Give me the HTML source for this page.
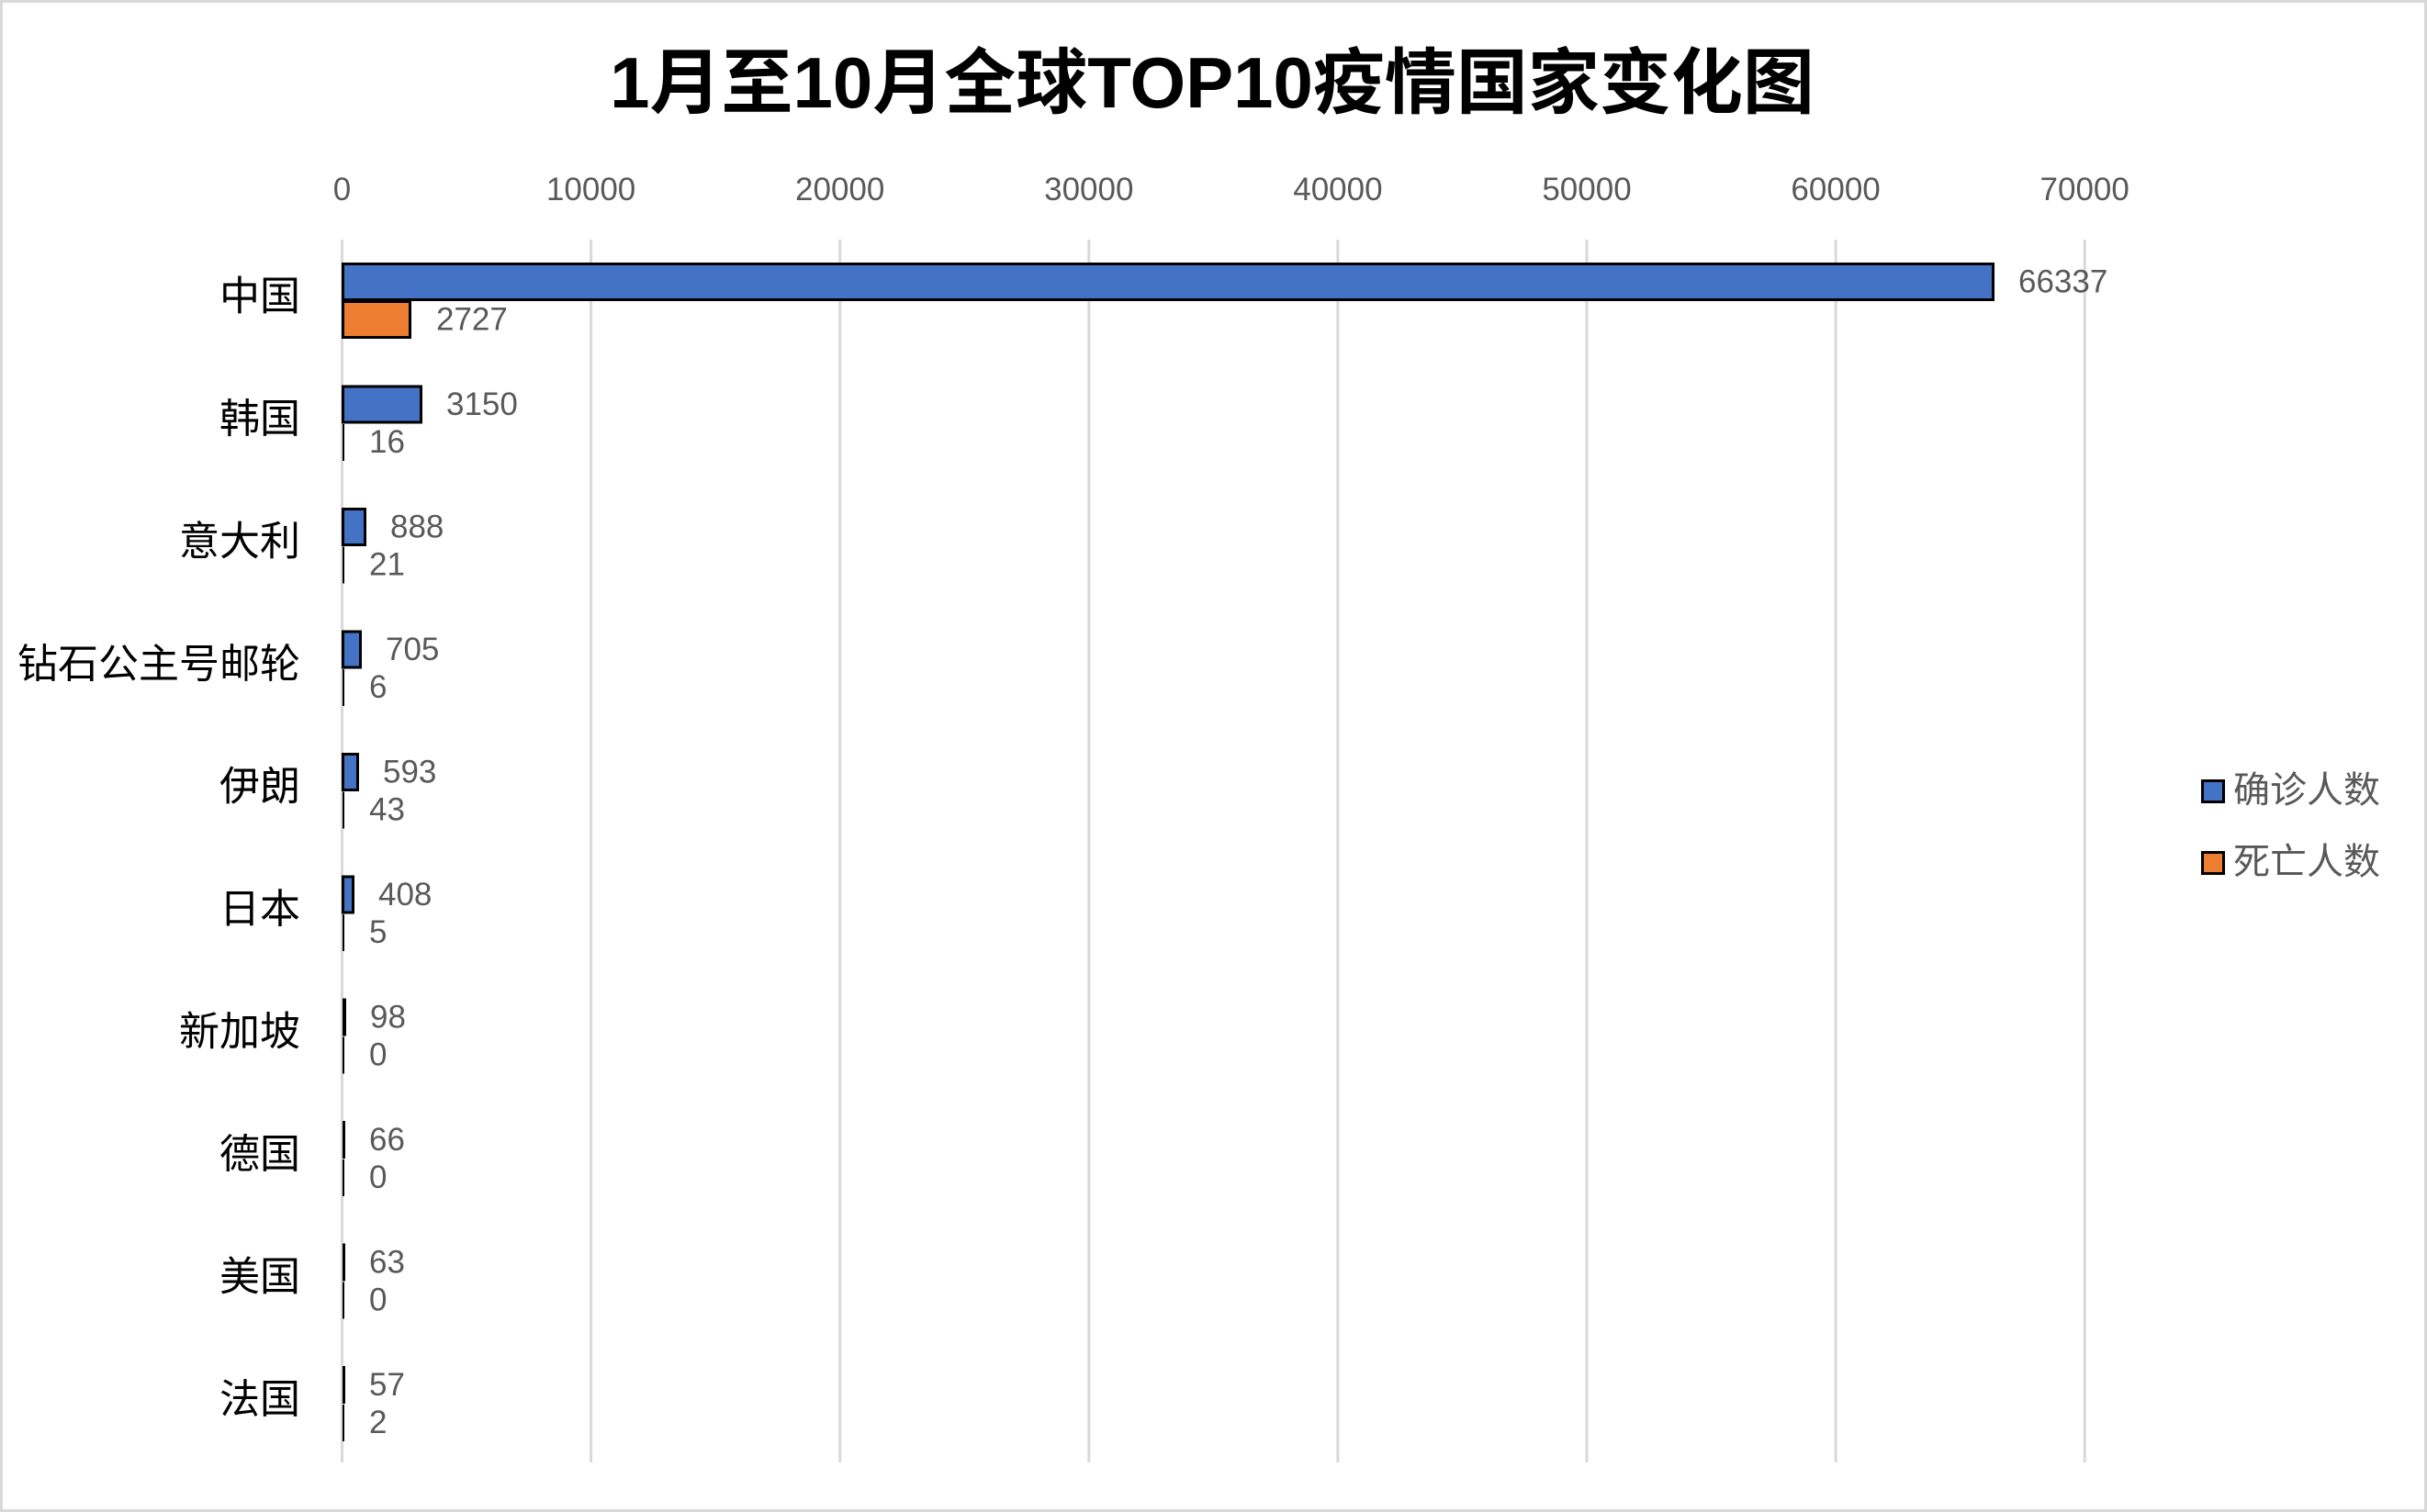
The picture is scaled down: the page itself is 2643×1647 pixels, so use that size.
<!DOCTYPE html>
<html><head><meta charset="utf-8"><style>
html,body{margin:0;padding:0;background:#fff}
svg{display:block}
</style></head><body>
<svg xmlns="http://www.w3.org/2000/svg" width="2643" height="1647" viewBox="0 0 2643 1647">
<rect x="1.5" y="1.5" width="2640" height="1644" fill="#fff" stroke="#d9d9d9" stroke-width="3"/>
<text x="1320" y="90" font-family="Liberation Sans, Noto Sans CJK SC, sans-serif" font-weight="bold" font-size="78" text-anchor="middle" dominant-baseline="central" fill="#000">1月至10月全球TOP10疫情国家变化图</text>
<g stroke="#d9d9d9" stroke-width="3">
<line x1="372.5" y1="261" x2="372.5" y2="1593"/>
<line x1="643.6" y1="261" x2="643.6" y2="1593"/>
<line x1="914.7" y1="261" x2="914.7" y2="1593"/>
<line x1="1185.8" y1="261" x2="1185.8" y2="1593"/>
<line x1="1456.9" y1="261" x2="1456.9" y2="1593"/>
<line x1="1728" y1="261" x2="1728" y2="1593"/>
<line x1="1999.1" y1="261" x2="1999.1" y2="1593"/>
<line x1="2270.2" y1="261" x2="2270.2" y2="1593"/>
</g>
<g font-family="Liberation Sans, sans-serif" font-size="35" fill="#595959" text-anchor="middle">
<text x="372.5" y="218">0</text>
<text x="643.6" y="218">10000</text>
<text x="914.7" y="218">20000</text>
<text x="1185.8" y="218">30000</text>
<text x="1456.9" y="218">40000</text>
<text x="1728" y="218">50000</text>
<text x="1999.1" y="218">60000</text>
<text x="2270.2" y="218">70000</text>
</g>
<g id="bars"></g>
<g font-family="Liberation Sans, Noto Sans CJK SC, sans-serif" font-size="40" fill="#595959">
<rect x="2398.5" y="850.5" width="23" height="23" fill="#4472c4" stroke="#000" stroke-width="3"/>
<text x="2432" y="861" dominant-baseline="central">确诊人数</text>
<rect x="2398.5" y="928.5" width="23" height="23" fill="#ed7d31" stroke="#000" stroke-width="3"/>
<text x="2432" y="939" dominant-baseline="central">死亡人数</text>
</g>
<g font-family="Liberation Sans, Noto Sans CJK SC, sans-serif" font-size="44" fill="#000" text-anchor="end" dominant-baseline="central">
<text x="327" y="323" dominant-baseline="central">中国</text>
<text x="327" y="456.5" dominant-baseline="central">韩国</text>
<text x="327" y="590" dominant-baseline="central">意大利</text>
<text x="327" y="723.5" dominant-baseline="central">钻石公主号邮轮</text>
<text x="327" y="857" dominant-baseline="central">伊朗</text>
<text x="327" y="990.5" dominant-baseline="central">日本</text>
<text x="327" y="1124" dominant-baseline="central">新加坡</text>
<text x="327" y="1257.5" dominant-baseline="central">德国</text>
<text x="327" y="1391" dominant-baseline="central">美国</text>
<text x="327" y="1524.5" dominant-baseline="central">法国</text>
</g>
<g font-family="Liberation Sans, sans-serif" font-size="35" fill="#595959">
<!-- row 0 -->
<rect x="373.5" y="287.5" width="1797" height="39" fill="#4472c4" stroke="#000" stroke-width="3"/>
<text x="2198" y="307" dominant-baseline="central">66337</text>
<rect x="373.5" y="328.5" width="73" height="39" fill="#ed7d31" stroke="#000" stroke-width="3"/>
<text x="475" y="348" dominant-baseline="central">2727</text>
<!-- row 1 -->
<rect x="373.5" y="421" width="85" height="39" fill="#4472c4" stroke="#000" stroke-width="3"/>
<text x="486" y="440.5" dominant-baseline="central">3150</text>
<rect x="373" y="462" width="2" height="40" fill="#000"/>
<text x="402" y="481.5" dominant-baseline="central">16</text>
<!-- row 2 -->
<rect x="373.5" y="554.5" width="24" height="39" fill="#4472c4" stroke="#000" stroke-width="3"/>
<text x="425" y="574" dominant-baseline="central">888</text>
<rect x="373" y="595.5" width="2" height="40" fill="#000"/>
<text x="402" y="615" dominant-baseline="central">21</text>
<!-- row 3 -->
<rect x="373.5" y="688" width="19" height="39" fill="#4472c4" stroke="#000" stroke-width="3"/>
<text x="420" y="707.5" dominant-baseline="central">705</text>
<rect x="373" y="729" width="2" height="40" fill="#000"/>
<text x="402" y="748.5" dominant-baseline="central">6</text>
<!-- row 4 -->
<rect x="373.5" y="821.5" width="16" height="39" fill="#4472c4" stroke="#000" stroke-width="3"/>
<text x="417" y="841" dominant-baseline="central">593</text>
<rect x="373" y="862.5" width="2" height="40" fill="#000"/>
<text x="402" y="882" dominant-baseline="central">43</text>
<!-- row 5 -->
<rect x="373.5" y="955" width="11" height="39" fill="#4472c4" stroke="#000" stroke-width="3"/>
<text x="412" y="974.5" dominant-baseline="central">408</text>
<rect x="373" y="996" width="2" height="40" fill="#000"/>
<text x="402" y="1015.5" dominant-baseline="central">5</text>
<!-- row 6 -->
<rect x="373" y="1087.5" width="4" height="41" fill="#000"/>
<text x="403" y="1108" dominant-baseline="central">98</text>
<rect x="373" y="1129.5" width="2" height="40" fill="#000"/>
<text x="402" y="1149" dominant-baseline="central">0</text>
<!-- row 7 -->
<rect x="373" y="1221" width="3" height="41" fill="#000"/>
<text x="402" y="1241.5" dominant-baseline="central">66</text>
<rect x="373" y="1263" width="2" height="40" fill="#000"/>
<text x="402" y="1282.5" dominant-baseline="central">0</text>
<!-- row 8 -->
<rect x="373" y="1354.5" width="3" height="41" fill="#000"/>
<text x="402" y="1375" dominant-baseline="central">63</text>
<rect x="373" y="1396.5" width="2" height="40" fill="#000"/>
<text x="402" y="1416" dominant-baseline="central">0</text>
<!-- row 9 -->
<rect x="373" y="1488" width="3" height="41" fill="#000"/>
<text x="402" y="1508.5" dominant-baseline="central">57</text>
<rect x="373" y="1530" width="2" height="40" fill="#000"/>
<text x="402" y="1549.5" dominant-baseline="central">2</text>
</g>
</svg>
</body></html>
